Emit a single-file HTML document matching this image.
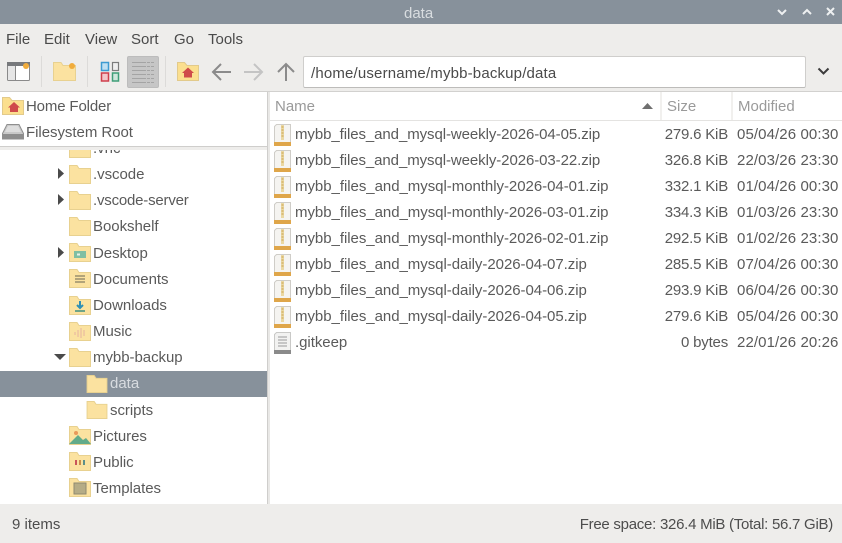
<!DOCTYPE html>
<html><head><meta charset="utf-8">
<style>
*{box-sizing:border-box}
html,body{margin:0;padding:0;width:842px;height:543px;overflow:hidden;background:#eeedeb;font-family:"Liberation Sans",sans-serif;color:#4d4d4d}
.a{position:absolute}
.t{position:absolute;font-size:15px;line-height:20px;white-space:nowrap;color:#5a5a5a;margin-top:2px}
.m{color:#4a4a4a;top:28px}
.f{letter-spacing:-.04px}
.y{margin-top:1px}
.r{text-align:right;letter-spacing:-.2px}
.d{letter-spacing:.1px}
svg{position:absolute;overflow:visible}
</style></head>
<body>
<svg width="0" height="0" style="position:absolute">
<defs>
<symbol id="folder" viewBox="0 0 22 19"><path d="M.5 18.500V.5h7.500l2 3h11.500v15z" fill="#fbe2a0" stroke="#e8d190"/></symbol>
<symbol id="zip" viewBox="0 0 17 22"><path d="M.5 21.500V2.500l2-2h14v21z" fill="#f5f4f1" stroke="#cfcdc8"/><rect x="0" y="18" width="17" height="4" fill="#dfa64a"/><path d="M7 1h3v15H7z" fill="#ead8a2"/><path d="M7.500 3h2M7.500 6h2M7.500 9h2M7.500 12h2" stroke="#c9a04e"/></symbol>
</defs>
</svg>

<div class="a" style="left:0;top:0;width:842px;height:24px;background:#87919b"></div>
<div class="t" style="left:404px;top:2px;color:#d9dde0">data</div>
<svg style="left:776px;top:8px" width="60" height="10" fill="none" stroke="#eef0f1" stroke-width="2"><path d="M2 2l4 4 4-4M27 6l4-4 4 4"/><path d="M51 0l7 7M58 0l-7 7"/></svg>

<div class="t m" style="left:6px">File</div>
<div class="t m" style="left:44px">Edit</div>
<div class="t m" style="left:85px">View</div>
<div class="t m" style="left:131px">Sort</div>
<div class="t m" style="left:174px">Go</div>
<div class="t m" style="left:208px">Tools</div>

<!-- toolbar -->
<svg style="left:7px;top:62px" width="23" height="19"><rect x=".5" y=".5" width="22" height="18" rx="1" fill="#fff" stroke="#8a8a8a"/><rect x="0" y="0" width="23" height="4" fill="#77797c"/><path d="M8.500 4v14" stroke="#8a8a8a"/><rect x="1" y="4" width="7" height="14" fill="#e6e6e6"/><circle cx="19" cy="4" r="3" fill="#f0ac3c"/></svg>
<div class="a" style="left:41px;top:56px;width:1px;height:31px;background:#dcdbd9"></div>
<svg style="left:53px;top:62px" width="23" height="19"><path d="M.5 18.500V.5h7.500l2 3h12.500v15z" fill="#fbe2a0" stroke="#e8d190"/><circle cx="19" cy="4" r="3" fill="#f0ac3c"/></svg>
<div class="a" style="left:87px;top:56px;width:1px;height:31px;background:#dcdbd9"></div>
<svg style="left:101px;top:62px" width="19" height="19"><rect x=".5" y=".5" width="7" height="8" fill="#bfe0f2" stroke="#3d9bd1" stroke-width="1.500"/><rect x="11.500" y=".5" width="6" height="8" fill="#efefef" stroke="#7c7c7c" stroke-width="1.200"/><rect x=".5" y="11" width="7" height="8" fill="#f3c6ca" stroke="#cf3f4c" stroke-width="1.500"/><rect x="11.500" y="11" width="6" height="8" fill="#cfe7dc" stroke="#3f9e78" stroke-width="1.500"/></svg>
<div class="a" style="left:127px;top:56px;width:32px;height:32px;background:#c6c6c6;border:1px solid #bcbcbc;border-radius:2px"></div>
<svg style="left:132px;top:60px" width="22" height="24" stroke="#a4a4a4" stroke-width="1"><path d="M0 2.500h22M0 6.500h22M0 10.500h22M0 14.500h22M0 18.500h22M0 22.500h22"/><path d="M14.500 0v24M18.500 0v24" stroke="#c6c6c6"/></svg>
<div class="a" style="left:165px;top:56px;width:1px;height:31px;background:#dcdbd9"></div>
<svg style="left:177px;top:62px" width="22" height="19"><path d="M.5 18.500V.5h7l2.500 3h11.500v15z" fill="#fbdf8f" stroke="#e2ca8b"/><path d="M11 5.500l6 5.500h-2v4.500h-8V11H5z" fill="#cf4a4a"/></svg>
<svg style="left:211px;top:62px" width="90" height="20" fill="none" stroke-width="2"><path d="M20 10H2M10 2l-8 8 8 8" stroke="#8b8b8b"/><path d="M33 10h18M43 2l8 8-8 8" stroke="#c4c4c4"/><path d="M75 19V2M67 10l8-8 8 8" stroke="#8b8b8b"/></svg>
<div class="a" style="left:303px;top:56px;width:503px;height:32px;background:#fff;border:1px solid #cfcecc;border-bottom-color:#bdbcba;border-radius:2px"></div>
<div class="t" style="left:311px;top:62px;color:#4a4a4a;letter-spacing:.17px">/home/username/mybb-backup/data</div>
<svg style="left:817px;top:67px" width="13" height="9" fill="none" stroke="#3c3c3c" stroke-width="2"><path d="M1.500 1.500l5 5 5-5"/></svg>

<!-- panes -->
<div class="a" style="left:0;top:91px;width:842px;height:1px;background:#d2d1cf"></div>
<div class="a" style="left:0;top:92px;width:267px;height:412px;background:#fff"></div>
<div class="a" style="left:270px;top:92px;width:572px;height:412px;background:#fff"></div>
<div class="a" style="left:267px;top:92px;width:3px;height:412px;background:#e9e8e6"></div>
<div class="a" style="left:267px;top:92px;width:1px;height:412px;background:#cfcecc"></div>
<div class="a" style="left:0;top:146px;width:267px;height:1px;background:#cfcecc"></div>

<!-- places -->
<svg style="left:2px;top:97px" width="22" height="18"><path d="M.5 17.500V.5h7l2.500 3h11.500v14z" fill="#fbdf8f" stroke="#e2ca8b"/><path d="M12 5l6 5.500h-2V15H8v-4.500H6z" fill="#cf4a4a"/></svg>
<div class="t" style="left:26px;top:95px;letter-spacing:-.15px">Home Folder</div>
<svg style="left:2px;top:124px" width="22" height="16"><path d="M5 .5h12l4.500 9v5.500H.5V9.500z" fill="#c9c9c9" stroke="#8f8f8f"/><path d="M1 10h20v4.500H1z" fill="#8e8e8e"/><path d="M6 2h10l3 6H3z" fill="#dedede"/></svg>
<div class="t f" style="left:26px;top:121px">Filesystem Root</div>

<!-- tree -->
<div class="a" style="left:0;top:150px;width:267px;height:354px;overflow:hidden">
 <svg style="left:69px;top:-11px" width="22" height="19"><use href="#folder"/></svg>
 <div class="t y" style="left:93px;top:-12px">.vnc</div>
</div>
<div class="a" style="left:0;top:147px;width:267px;height:3px;background:#eeedeb"></div>

<svg style="left:58px;top:168px" width="6" height="11"><path d="M0 0l6 5.500L0 11z" fill="#4a4a4a"/></svg>
<svg style="left:69px;top:165px" width="22" height="19"><use href="#folder"/></svg>
<div class="t f y" style="left:93px;top:164px">.vscode</div>
<svg style="left:58px;top:194px" width="6" height="11"><path d="M0 0l6 5.500L0 11z" fill="#4a4a4a"/></svg>
<svg style="left:69px;top:191px" width="22" height="19"><use href="#folder"/></svg>
<div class="t y" style="left:93px;top:190px;letter-spacing:-.2px">.vscode-server</div>
<svg style="left:69px;top:217px" width="22" height="19"><use href="#folder"/></svg>
<div class="t f y" style="left:93px;top:216px">Bookshelf</div>
<svg style="left:58px;top:247px" width="6" height="11"><path d="M0 0l6 5.500L0 11z" fill="#4a4a4a"/></svg>
<svg style="left:69px;top:243px" width="22" height="19"><use href="#folder"/><rect x="5" y="8" width="12" height="7" fill="#7fbfa3"/><rect x="8" y="10.500" width="3" height="2" fill="#e8f2e8"/></svg>
<div class="t f y" style="left:93px;top:243px">Desktop</div>
<svg style="left:69px;top:269px" width="22" height="19"><use href="#folder"/><path d="M6 7h10M6 10h10M6 13h10" stroke="#9a8f6e" stroke-width="1.500"/></svg>
<div class="t f y" style="left:93px;top:269px">Documents</div>
<svg style="left:69px;top:296px" width="22" height="19"><use href="#folder"/><path d="M11 5v6M8 9l3 3 3-3" stroke="#2f8fb5" stroke-width="2" fill="none"/><path d="M6 15h10" stroke="#3f8f80" stroke-width="1.500"/></svg>
<div class="t f y" style="left:93px;top:295px">Downloads</div>
<svg style="left:69px;top:322px" width="22" height="19"><use href="#folder"/><path d="M6 10v3M9 8v7M12 6v10M15 8v6" stroke="#e2a8a0" stroke-width=".8" fill="none"/></svg>
<div class="t f y" style="left:93px;top:321px">Music</div>
<svg style="left:54px;top:354px" width="12" height="6"><path d="M0 0h12L6 6z" fill="#4a4a4a"/></svg>
<svg style="left:69px;top:348px" width="22" height="19"><use href="#folder"/></svg>
<div class="t f y" style="left:93px;top:347px">mybb-backup</div>

<div class="a" style="left:0;top:371px;width:267px;height:26px;background:#87919b"></div>
<svg style="left:86px;top:375px" width="22" height="18"><use href="#folder"/></svg>
<div class="t y" style="left:110px;top:373px;color:#d8dce0">data</div>
<svg style="left:86px;top:401px" width="22" height="18"><use href="#folder"/></svg>
<div class="t f y" style="left:110px;top:400px">scripts</div>

<svg style="left:69px;top:426px" width="22" height="19"><use href="#folder"/><path d="M0 18l9-9 5 5 3-2 5 6z" fill="#62ab8a"/><circle cx="7" cy="7" r="2" fill="#e9995a"/></svg>
<div class="t f y" style="left:93px;top:426px">Pictures</div>
<svg style="left:69px;top:452px" width="22" height="19"><use href="#folder"/><path d="M7 8v5" stroke="#c9555a" stroke-width="2"/><path d="M11 8v5" stroke="#c98d4a" stroke-width="2"/><path d="M15 8v5" stroke="#5d8f8a" stroke-width="2"/></svg>
<div class="t f y" style="left:93px;top:452px">Public</div>
<svg style="left:69px;top:478px" width="22" height="19"><use href="#folder"/><rect x="5" y="5" width="12" height="11" fill="#b5ac86" stroke="#8f8a70"/></svg>
<div class="t f y" style="left:93px;top:478px">Templates</div>

<!-- header -->
<div class="a" style="left:270px;top:120px;width:572px;height:1px;background:#e4e3e1"></div>
<div class="a" style="left:660px;top:92px;width:2px;height:28px;background:#f1f0ee"></div>
<div class="a" style="left:731px;top:92px;width:2px;height:28px;background:#f1f0ee"></div>
<div class="t" style="left:275px;top:95px;color:#9a9a9a">Name</div>
<svg style="left:642px;top:103px" width="11" height="6"><path d="M0 6L5.500 0 11 6z" fill="#6f6f6f"/></svg>
<div class="t" style="left:667px;top:95px;color:#9a9a9a">Size</div>
<div class="t" style="left:738px;top:95px;color:#9a9a9a">Modified</div>

<!-- files -->
<svg style="left:274px;top:124px" width="17" height="22"><use href="#zip"/></svg>
<div class="t f" style="left:295px;top:123px;letter-spacing:-.08px">mybb_files_and_mysql-weekly-2026-04-05.zip</div>
<div class="t r" style="right:114px;top:123px">279.6 KiB</div><div class="t d" style="left:737px;top:123px">05/04/26 00:30</div>
<svg style="left:274px;top:150px" width="17" height="22"><use href="#zip"/></svg>
<div class="t f" style="left:295px;top:149px;letter-spacing:-.08px">mybb_files_and_mysql-weekly-2026-03-22.zip</div>
<div class="t r" style="right:114px;top:149px">326.8 KiB</div><div class="t d" style="left:737px;top:149px">22/03/26 23:30</div>
<svg style="left:274px;top:176px" width="17" height="22"><use href="#zip"/></svg>
<div class="t f" style="left:295px;top:175px">mybb_files_and_mysql-monthly-2026-04-01.zip</div>
<div class="t r" style="right:114px;top:175px">332.1 KiB</div><div class="t d" style="left:737px;top:175px">01/04/26 00:30</div>
<svg style="left:274px;top:202px" width="17" height="22"><use href="#zip"/></svg>
<div class="t f" style="left:295px;top:201px">mybb_files_and_mysql-monthly-2026-03-01.zip</div>
<div class="t r" style="right:114px;top:201px">334.3 KiB</div><div class="t d" style="left:737px;top:201px">01/03/26 23:30</div>
<svg style="left:274px;top:228px" width="17" height="22"><use href="#zip"/></svg>
<div class="t f" style="left:295px;top:227px">mybb_files_and_mysql-monthly-2026-02-01.zip</div>
<div class="t r" style="right:114px;top:227px">292.5 KiB</div><div class="t d" style="left:737px;top:227px">01/02/26 23:30</div>
<svg style="left:274px;top:254px" width="17" height="22"><use href="#zip"/></svg>
<div class="t f" style="left:295px;top:253px">mybb_files_and_mysql-daily-2026-04-07.zip</div>
<div class="t r" style="right:114px;top:253px">285.5 KiB</div><div class="t d" style="left:737px;top:253px">07/04/26 00:30</div>
<svg style="left:274px;top:280px" width="17" height="22"><use href="#zip"/></svg>
<div class="t f" style="left:295px;top:279px">mybb_files_and_mysql-daily-2026-04-06.zip</div>
<div class="t r" style="right:114px;top:279px">293.9 KiB</div><div class="t d" style="left:737px;top:279px">06/04/26 00:30</div>
<svg style="left:274px;top:306px" width="17" height="22"><use href="#zip"/></svg>
<div class="t f" style="left:295px;top:305px">mybb_files_and_mysql-daily-2026-04-05.zip</div>
<div class="t r" style="right:114px;top:305px">279.6 KiB</div><div class="t d" style="left:737px;top:305px">05/04/26 00:30</div>
<svg style="left:274px;top:332px" width="17" height="22"><path d="M.5 21.500V2.500l2-2h14v21z" fill="#f2f2f1" stroke="#c9c9c7"/><rect x="0" y="18" width="17" height="4" fill="#8a8a8a"/><path d="M4 5h9M4 8h9M4 11h9M4 14h9" stroke="#9a9a9a"/></svg>
<div class="t f" style="left:295px;top:331px">.gitkeep</div>
<div class="t r" style="right:114px;top:331px">0 bytes</div><div class="t d" style="left:737px;top:331px">22/01/26 20:26</div>

<!-- status -->
<div class="t" style="left:12px;top:513px;color:#4d4d4d">9 items</div>
<div class="t" style="right:9px;top:513px;color:#4d4d4d;letter-spacing:-.26px">Free space: 326.4 MiB (Total: 56.7 GiB)</div>
</body></html>
